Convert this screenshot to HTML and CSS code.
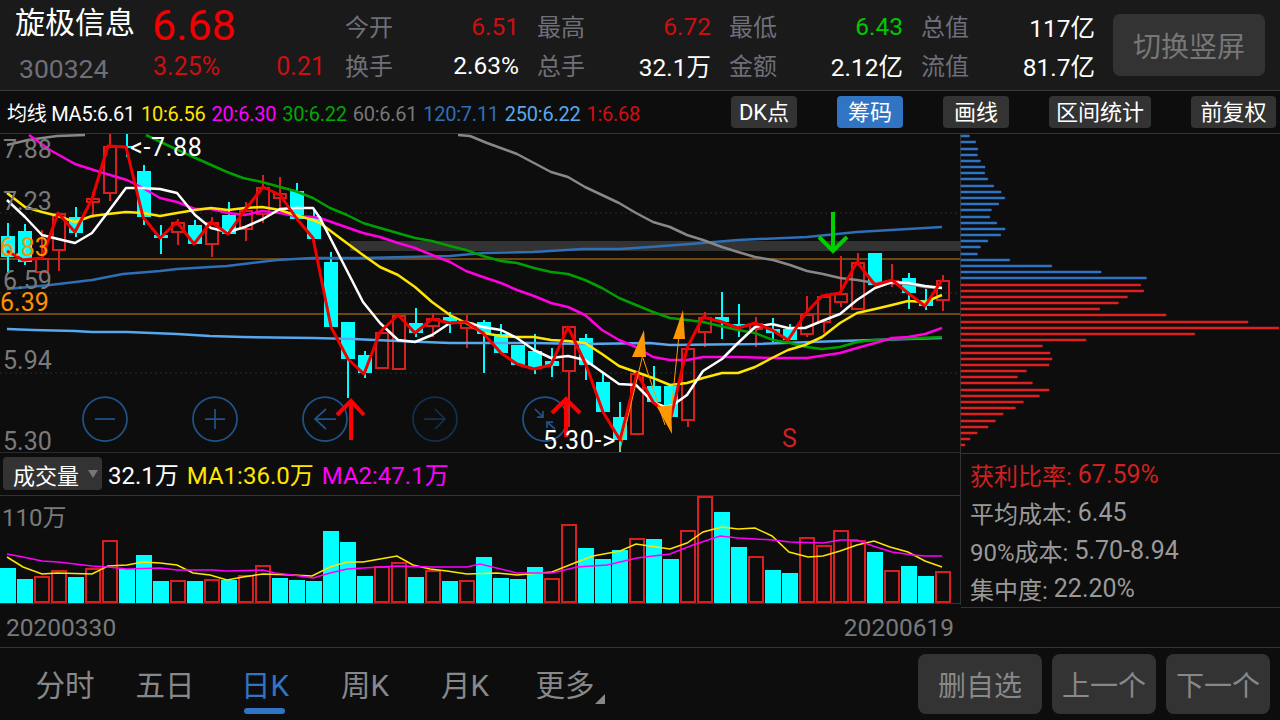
FILE: index.html
```html
<!DOCTYPE html>
<html lang="zh">
<head>
<meta charset="utf-8">
<title>旋极信息</title>
<link rel="stylesheet" href="styles.css">
</head>
<body>
<div class="app">
  <header class="quote">
    <div class="identity">
      <div class="name">旋极信息</div>
      <div class="code">300324</div>
    </div>
    <div class="price">
      <div class="last">6.68</div>
      <div class="change"><span>3.25%</span><span>0.21</span></div>
    </div>
    <div class="stats">
      <div class="stat"><span class="lbl">今开</span><span class="up">6.51</span></div>
      <div class="stat"><span class="lbl">最高</span><span class="up">6.72</span></div>
      <div class="stat"><span class="lbl">最低</span><span class="down">6.43</span></div>
      <div class="stat"><span class="lbl">总值</span><span class="val">117亿</span></div>
      <div class="stat"><span class="lbl">换手</span><span class="val">2.63%</span></div>
      <div class="stat"><span class="lbl">总手</span><span class="val">32.1万</span></div>
      <div class="stat"><span class="lbl">金额</span><span class="val">2.12亿</span></div>
      <div class="stat"><span class="lbl">流值</span><span class="val">81.7亿</span></div>
    </div>
    <button class="rotate">切换竖屏</button>
  </header>

  <div class="toolbar">
    <div class="legend">
      <span class="c-white">均线 MA5:6.61</span>
      <span class="c-yellow">10:6.56</span>
      <span class="c-magenta">20:6.30</span>
      <span class="c-green">30:6.22</span>
      <span class="c-gray">60:6.61</span>
      <span class="c-blue">120:7.11</span>
      <span class="c-sky">250:6.22</span>
      <span class="c-red">1:6.68</span>
    </div>
    <div class="tools">
      <span class="tool">DK点</span>
      <span class="tool active">筹码</span>
      <span class="tool">画线</span>
      <span class="tool range">区间统计</span>
      <span class="tool adjust">前复权</span>
    </div>
  </div>

  <div class="board">
    <div class="charts">
      <svg class="kline" viewBox="0 134 960 318" width="960" height="318">
        <path class="grid" d="M0 213H960M0 293H960M0 373H960"/>
        <rect class="band" x="350" y="241" width="610" height="10"/>
        <path class="level" d="M0 259H960M0 314H960"/>

        <path class="wick-cy" d="M8 223V272M25 224V265M76 207V237M127 134V157M144 165V225M161 225V254M195 220V244M229 202V234M297 183V219M314 210V239M331 252V327M348 322V398M365 351V378M416 308V337M450 312V333M484 320V373M501 324V353M535 334V374M552 348V377M586 334V380M603 372V412M620 402V452M654 366V402M722 292V339M739 304V337M773 318V342M790 324V340M909 273V309M926 289V310"/>
        <path class="body-cy" d="M1 236h14V257h-14zM18 231h14V262h-14zM69 217h14V233h-14zM120 146h14V148h-14zM137 171h14V217h-14zM154 235h14V238h-14zM188 225h14V244h-14zM222 215h14V234h-14zM290 191h14V219h-14zM307 216h14V239h-14zM324 262h14V327h-14zM341 322h14V359h-14zM358 355h14V373h-14zM409 323h14V333h-14zM443 317h14V321h-14zM477 322h14V334h-14zM494 334h14V353h-14zM511 345h14V365h-14zM528 351h14V369h-14zM545 361h14V366h-14zM579 338h14V365h-14zM596 382h14V412h-14zM613 417h14V440h-14zM647 386h14V402h-14zM664 386h14V417h-14zM715 317h14V322h-14zM732 324h14V327h-14zM766 329h14V333h-14zM783 329h14V340h-14zM868 253h14V285h-14zM902 278h14V293h-14zM919 300h14V306h-14z"/>
        <path class="candle-up" d="M42 230V258M59 251V271M93 192V198M93 203V218M110 134V146M110 194V201M178 219V222M178 233V245M212 217V222M212 245V257M246 202V210M246 230V241M263 175V187M263 215V223M280 177V193M280 199V210M433 313V318M433 327V337M467 315V322M467 329V348M569 372V427M688 421V427M705 312V317M705 333V347M756 317V323M756 330V347M807 296V314M807 335V337M824 323V333M841 256V293M841 303V307M858 253V262M892 264V280M892 283V287M943 275V280M943 301V311"/>
        <path class="candle-up" d="M36 259h12V272h-12zM53 214h12V250h-12zM87 199h12V202h-12zM104 147h12V193h-12zM172 223h12V232h-12zM206 223h12V244h-12zM240 211h12V229h-12zM257 188h12V214h-12zM274 194h12V198h-12zM376 333h12V368h-12zM393 316h12V369h-12zM427 319h12V326h-12zM461 323h12V328h-12zM563 327h12V371h-12zM631 374h12V434h-12zM682 349h12V420h-12zM699 318h12V332h-12zM750 324h12V329h-12zM801 315h12V334h-12zM818 297h12V322h-12zM835 294h12V302h-12zM852 263h12V309h-12zM886 281h12V282h-12zM937 281h12V300h-12z"/>

        <polyline class="ma m250" points="7,329 33,330 75,331 92,332 127,332 177,334 210,336 243,337 313,338 353,339 398,341 450,343 533,343 585,344 650,343 670,345 755,344 840,341 942,338"/>
        <polyline class="ma m120" points="7,289 50,285 92,280 123,274 160,271 177,269 227,266 277,260 313,258 363,258 450,256 483,253 533,252 583,249 620,249 650,247 690,244 738,240 807,237 857,232 942,227"/>
        <polyline class="ma m60" points="7,145 28,140 57,136 85,135"/>
        <polyline class="ma m60" points="458,135 470,136 487,143 517,154 534,163 551,172 568,177 585,187 602,195 619,203 636,213 653,222 670,227 687,235 703,240 722,247 738,252 755,257 773,260 790,265 807,271 823,274 840,278 857,280 875,283 892,283 908,284 925,287 942,288"/>
        <polyline class="ma m30" points="146,135 167,145 200,160 227,172 243,178 262,182 280,187 295,191 313,198 330,208 347,215 363,223 380,228 415,238 432,241 450,246 466,250 483,256 501,261 517,263 534,268 551,272 568,274 585,280 602,288 619,298 636,305 653,312 670,318 687,320 703,322 738,330 755,333 773,340 790,343 807,347 822,349 840,347 857,342 875,340 942,337"/>
        <polyline class="ma m20" points="29,135 50,150 75,164 100,172 127,180 143,188 160,198 177,202 195,209 211,209 228,213 245,215 262,211 280,213 295,216 313,217 320,218 340,225 363,233 380,237 398,243 415,248 432,255 450,262 466,271 483,277 501,283 517,290 534,296 551,303 568,307 585,315 602,330 619,340 636,347 653,357 670,360 687,360 703,357 738,357 773,358 807,358 840,353 857,348 875,343 892,338 908,337 925,334 942,328"/>
        <polyline class="ma m10" points="7,193 25,207 42,212 58,216 75,222 92,216 108,214 126,212 143,213 160,216 177,213 195,210 211,208 228,210 245,208 262,207 280,210 295,215 313,220 320,223 340,238 363,255 380,267 398,275 415,287 432,302 450,315 466,323 483,333 501,336 517,337 534,337 551,340 568,341 585,343 602,354 619,366 636,372 653,378 670,385 687,383 703,378 722,373 738,373 755,367 772,358 788,350 805,345 822,337 840,323 857,313 875,309 892,305 908,301 925,302 942,295"/>
        <polyline class="ma m5" points="7,200 25,217 42,235 58,239 75,243 92,233 108,212 126,188 143,188 160,189 177,193 195,215 211,228 228,232 245,227 263,219 280,209 295,208 313,208 320,218 340,257 363,302 380,323 398,340 415,342 432,335 450,323 466,322 483,327 501,330 517,338 534,350 551,358 568,356 585,360 602,372 619,384 636,385 653,402 665,407 673,405 687,395 703,371 722,359 738,343 755,327 772,324 788,328 805,328 822,321 840,314 857,300 875,288 892,282 908,283 925,286 942,288"/>
        <polyline class="ma close" points="7,251 23,260 42,258 58,213 75,232 92,199 108,146 126,147 143,217 160,238 177,222 194,244 211,222 228,234 245,210 263,187 280,195 297,219 313,238 331,327 348,359 364,374 380,332 398,315 415,333 432,319 450,323 466,322 483,333 501,353 517,364 534,369 551,365 568,327 586,365 603,412 620,440 637,373 653,402 671,417 687,348 703,317 722,322 738,328 755,323 772,330 788,340 806,313 822,296 840,293 857,262 875,285 892,280 908,293 925,306 942,280"/>

        <g class="nav">
          <circle cx="105" cy="419" r="22"/><path d="M95 419H115"/>
          <circle cx="215" cy="419" r="22"/><path d="M205 419H225M215 409V429"/>
          <circle cx="325" cy="419" r="22"/><path d="M336 419H315M326 409L315 419L326 429"/>
          <g class="off"><circle cx="435" cy="419" r="22"/><path d="M424 419H445M435 409L445 419L435 429"/></g>
          <circle cx="545" cy="419" r="22"/><path d="M535 409L543 417M543 411V417H537M555 429L547 422M547 428V422H553"/>
        </g>

        <path class="signal-up" d="M351 440V401M337 415L351 401L364 415M566 437V398M552 413L566 399L580 413"/>
        <path class="signal-down" d="M833 212V250M819 237L833 251L847 237"/>
        <g class="fan">
          <path class="fan-line" d="M620 450L644 350M643 358L665 425M670 423L679 335"/>
          <path d="M644 330L646 357L632 357Z"/>
          <path d="M657 407L671 405L672 434Z"/>
          <path d="M683 310L685 339L673 339Z"/>
        </g>

        <text class="axis" x="3" y="158">7.88</text>
        <text class="axis" x="3" y="210">7.23</text>
        <text class="axis orange" x="0" y="256">6.83</text>
        <text class="axis" x="3" y="289">6.59</text>
        <text class="axis orange" x="0" y="311">6.39</text>
        <text class="axis" x="3" y="369">5.94</text>
        <text class="axis" x="3" y="450">5.30</text>
        <text class="axis mark" x="130" y="156">&lt;-7.88</text>
        <text class="axis mark" x="543" y="449">5.30-&gt;</text>
        <text class="axis sell" x="782" y="447">S</text>
      </svg>

      <div class="indicator">
        <span class="picker">成交量<i class="caret"></i></span>
        <span class="c-white">32.1万</span>
        <span class="c-yellow">MA1:36.0万</span>
        <span class="c-magenta">MA2:47.1万</span>
      </div>

      <svg class="volume" viewBox="0 496 960 109" width="960" height="109">
        <path class="baseline" d="M0 603.5H960"/>
        <path class="vol-cy" d="M0 603V568h16V603zM17 603V579h16V603zM68 603V577h16V603zM119 603V569h16V603zM136 603V555h16V603zM153 603V581h16V603zM187 603V581h16V603zM221 603V580h16V603zM272 603V578h16V603zM289 603V580h16V603zM306 603V581h16V603zM323 603V531h16V603zM340 603V542h16V603zM357 603V576h16V603zM408 603V577h16V603zM442 603V581h16V603zM476 603V557h16V603zM493 603V578h16V603zM510 603V579h16V603zM527 603V567h16V603zM578 603V548h16V603zM595 603V559h16V603zM612 603V550h16V603zM646 603V539h16V603zM663 603V559h16V603zM714 603V512h16V603zM731 603V547h16V603zM765 603V570h16V603zM782 603V573h16V603zM867 603V552h16V603zM901 603V566h16V603zM918 603V576h16V603z"/>
        <path class="vol-up" d="M35 602V577h14V602zM52 602V571h14V602zM86 602V569h14V602zM103 602V541h14V602zM171 602V581h14V602zM205 602V580h14V602zM239 602V576h14V602zM256 602V566h14V602zM375 602V567h14V602zM392 602V563h14V602zM426 602V571h14V602zM460 602V581h14V602zM545 602V579h14V602zM562 602V525h14V602zM630 602V539h14V602zM681 602V531h14V602zM698 602V497h14V602zM749 602V557h14V602zM800 602V538h14V602zM817 602V546h14V602zM834 602V531h14V602zM851 602V541h14V602zM885 602V571h14V602zM936 602V572h14V602z"/>
        <polyline class="vma y" points="7,557 23,567 42,574 57,573 92,574 108,566 127,565 143,562 160,563 177,565 193,573 210,575 227,580 243,577 263,574 293,575 312,576 330,567 347,562 363,562 380,559 397,556 413,565 430,569 447,571 467,574 497,573 517,575 552,572 577,562 593,556 620,551 636,544 670,549 687,543 703,532 722,527 738,529 755,528 772,536 789,552 808,557 823,556 840,551 857,545 874,541 890,547 908,552 925,561 942,567"/>
        <polyline class="vma p" points="7,554 23,557 42,561 58,562 92,566 108,567 127,569 160,568 177,570 213,570 227,571 263,570 275,573 293,575 313,578 330,573 347,569 397,566 430,567 467,567 480,564 517,573 552,573 577,567 607,565 620,562 637,558 670,554 693,545 720,536 738,538 773,540 790,542 823,543 840,540 857,540 873,546 892,552 913,555 925,556 942,556"/>
        <text class="axis small" x="2" y="526">110万</text>
      </svg>
    </div>

    <aside class="side">
      <svg class="chips" viewBox="961 134 319 319" width="319" height="319">
        <path class="chip-b" d="M961 135h8.3v2h-8.3zM961 141h14.7v2h-14.7zM961 148h16.7v2h-16.7zM961 154h16.3v2h-16.3zM961 160h19.3v2h-19.3zM961 166h24v2h-24zM961 172h23.7v2h-23.7zM961 178h26.7v2h-26.7zM961 185h32.7v2h-32.7zM961 191h40v2h-40zM961 197h43.7v2h-43.7zM961 203h37.7v2h-37.7zM961 209h30.3v2h-30.3zM961 216h28.7v2h-28.7zM961 222h35.7v2h-35.7zM961 228h44v2h-44zM961 234h39.7v2h-39.7zM961 240h26.7v2h-26.7zM961 246h19.3v2h-19.3zM961 253h16.3v2h-16.3zM961 259h48.7v2h-48.7zM961 265h90.7v2h-90.7zM961 271h140v2h-140zM961 277h185.3v2h-185.3z"/>
        <path class="chip-r" d="M961 284h179.7v2h-179.7zM961 290h182.7v2h-182.7zM961 296h166.3v2h-166.3zM961 302h157.3v2h-157.3zM961 308h138.7v2h-138.7zM961 314h205v2h-205zM961 321h287v2h-287zM961 327h318v2h-318zM961 333h233.7v2h-233.7zM961 339h125v2h-125zM961 345h81.3v2h-81.3zM961 352h89v2h-89zM961 358h91v2h-91zM961 364h88v2h-88zM961 370h65.3v2h-65.3zM961 376h56.3v2h-56.3zM961 382h71.3v2h-71.3zM961 389h88v2h-88zM961 395h78.3v2h-78.3zM961 401h62.3v2h-62.3zM961 407h54.3v2h-54.3zM961 413h42v2h-42zM961 420h34.3v2h-34.3zM961 426h27v2h-27zM961 432h16v2h-16zM961 438h9v2h-9zM961 444h4v2h-4z"/>
      </svg>
      <dl class="cost">
        <div class="profit"><dt>获利比率:</dt><dd>67.59%</dd></div>
        <div><dt>平均成本:</dt><dd>6.45</dd></div>
        <div><dt>90%成本:</dt><dd>5.70-8.94</dd></div>
        <div><dt>集中度:</dt><dd>22.20%</dd></div>
      </dl>
    </aside>
  </div>

  <div class="dates"><span>20200330</span><span>20200619</span></div>

  <footer class="bottom">
    <nav class="tabs">
      <span class="tab">分时</span>
      <span class="tab">五日</span>
      <span class="tab on">日K</span>
      <span class="tab">周K</span>
      <span class="tab">月K</span>
      <span class="tab more">更多</span>
    </nav>
    <div class="actions">
      <button class="act wide">删自选</button>
      <button class="act">上一个</button>
      <button class="act">下一个</button>
    </div>
  </footer>
</div>
</body>
</html>
```
FILE: styles.css
```css
* { box-sizing: border-box; }
html, body { margin: 0; padding: 0; background: #0d0d0d; }
body { font-family: Roboto, "Noto Sans CJK SC", sans-serif; color: #fff; }
.app { width: 1280px; height: 720px; overflow: hidden; display: flex; flex-direction: column; }
svg { display: block; overflow: visible; }

.quote { height: 91px; background: #1a1a1a; border-bottom: 1px solid #3a3a3a; display: flex; position: relative; }
.identity { width: 153px; padding-left: 15px; flex: none; }
.name { font-size: 30px; line-height: 45px; }
.code { font-size: 26.5px; line-height: 30px; margin-top: 9px; padding-left: 4px; color: #6f6f78; }
.price { width: 192px; flex: none; margin-left: -1px; }
.last { font-size: 43px; line-height: 50px; color: #f00000; }
.change { display: flex; justify-content: space-between; margin-top: 2px; padding: 0 19px 0 1px; font-size: 25px; line-height: 30px; color: #cc0f0f; }
.stats { width: 768px; flex: none; display: grid; grid-template-columns: repeat(4, 174px); column-gap: 18px; grid-template-rows: 39px 39px; padding-top: 7px; margin-left: 1px; }
.stat { display: flex; justify-content: space-between; align-items: center; font-size: 24.5px; }
.lbl { font-size: 24px; color: #6f6f78; margin-bottom: 2px; }
.up { color: #cc0f0f; }
.down { color: #00c800; }
.val { color: #fff; }
.rotate { width: 152px; height: 62px; border: 0; border-radius: 7px; background: #333; color: #777; font: 28px Roboto, "Noto Sans CJK SC", sans-serif; position: absolute; left: 1113px; top: 14px; padding: 0; }

.toolbar { height: 43px; border-bottom: 1px solid #333; background: #0d0d0d; display: flex; justify-content: space-between; align-items: center; padding: 0 4px 0 7px; }
.legend { display: flex; align-items: baseline; gap: 6px; font-size: 20px; letter-spacing: -.25px; white-space: nowrap; }
.tools { display: flex; gap: 40px; }
.tool { height: 32px; width: 66px; background: #333; border-radius: 4px; font-size: 22px; line-height: 33px; text-align: center; color: #fff; }
.tool.range { width: 102px; }
.tool.adjust { width: 85px; }
.tool.active { background: #3274c4; }
.c-white { color: #fff; }
.c-yellow { color: #ffe600; }
.c-magenta { color: #f0f; }
.c-green { color: #00a800; }
.c-gray { color: #777; }
.c-blue { color: #2f6fb5; }
.c-sky { color: #58a8f0; }
.c-red { color: #d01010; }

.board { display: flex; height: 471px; }
.charts { width: 960px; flex: none; }
.kline { border-bottom: 1px solid #2a2a2a; height: 319px; }
.grid { stroke: #2a2a2a; stroke-width: 1; stroke-dasharray: 2 3; fill: none; }
.band { fill: #333; }
.level { stroke: #8f5a14; stroke-width: 1.5; fill: none; }
.wick-cy { stroke: #00ffff; stroke-width: 2; fill: none; }
.body-cy, .vol-cy { fill: #00ffff; }
.candle-up, .vol-up { stroke: #d81f1f; stroke-width: 2; fill: none; }
.ma { fill: none; stroke-width: 2.5; stroke-linejoin: round; }
.m250 { stroke: #58a8f0; }
.m120 { stroke: #2f6fb5; }
.m60 { stroke: #888; }
.m30 { stroke: #00a000; }
.m20 { stroke: #ff00e0; }
.m10 { stroke: #ffe600; }
.m5 { stroke: #fff; }
.close { stroke: #f00000; stroke-width: 3; }
.nav { fill: none; stroke: #205288; stroke-width: 1.75; }
.off { stroke: #14304e; }
.signal-up { stroke: #f00; stroke-width: 4; fill: none; }
.signal-down { stroke: #00d000; stroke-width: 4; fill: none; }
.fan { fill: #ff9800; }
.fan-line { stroke: #ff9800; stroke-width: 1; fill: none; }
.axis { font-size: 25px; fill: #7a7a7a; }
.axis.small { font-size: 24px; }
.orange { fill: #ff9000; }
.mark { fill: #fff; letter-spacing: .7px; }
.sell { fill: #d02020; }

.indicator { height: 43px; border-bottom: 1px solid #333; display: flex; align-items: center; gap: 8px; padding: 0 0 1px 3px; font-size: 24px; white-space: nowrap; }
.picker { width: 99px; height: 33px; background: #333; border-radius: 4px; display: flex; align-items: center; padding-left: 10px; font-size: 22px; gap: 9px; margin-right: -2px; color: #fff; }
.caret { width: 0; height: 0; border-left: 5px solid transparent; border-right: 5px solid transparent; border-top: 8px solid #777; }
.baseline { stroke: #333; stroke-width: 1; }
.vma { fill: none; stroke-width: 1.5; }
.vma.y { stroke: #ffe600; }
.vma.p { stroke: #f0f; }

.side { width: 320px; flex: none; border-left: 1px solid #333; display: flex; flex-direction: column; }
.chips { border-bottom: 1px solid #333; height: 320px; }
.chip-b { fill: #2f75c5; stroke: rgba(47,117,197,.5); stroke-width: 1; }
.chip-r { fill: #e02020; stroke: rgba(224,32,32,.5); stroke-width: 1; }
.cost { margin: 0; flex: 1; border-bottom: 1px solid #333; padding: 1px 0 0 9px; color: #999; font-size: 24px; }
.cost div { display: flex; gap: 6px; height: 38px; align-items: center; }
.cost dt, .cost dd { margin: 0; }
.cost dd { font-size: 25px; }
.profit { color: #d02020; }

.dates { height: 43px; border-bottom: 1px solid #333; display: flex; justify-content: space-between; align-items: center; padding: 2px 326px 0 6px; color: #7a7a7a; font-size: 24.5px; }
.bottom { flex: 1; display: flex; justify-content: space-between; }
.tabs { display: flex; width: 620px; padding-left: 15px; }
.tab { width: 100px; height: 72px; font-size: 29.5px; line-height: 76px; text-align: center; color: #888; position: relative; }
.tab.on { color: #3274c4; }
.tab.on::after { content: ""; position: absolute; left: 29px; right: 30px; bottom: 6px; height: 6px; border-radius: 3px; background: #3274c4; }
.more::after { content: ""; position: absolute; right: 10px; top: 46px; width: 0; height: 0; border-left: 10px solid transparent; border-bottom: 10px solid #888; }
.actions { display: flex; gap: 10px; padding: 6px 10px 0 0; }
.act { width: 104px; height: 60px; border: 0; border-radius: 8px; background: #333; color: #888; font: 28px Roboto, "Noto Sans CJK SC", sans-serif; padding: 0; }
.act.wide { width: 124px; }
```
